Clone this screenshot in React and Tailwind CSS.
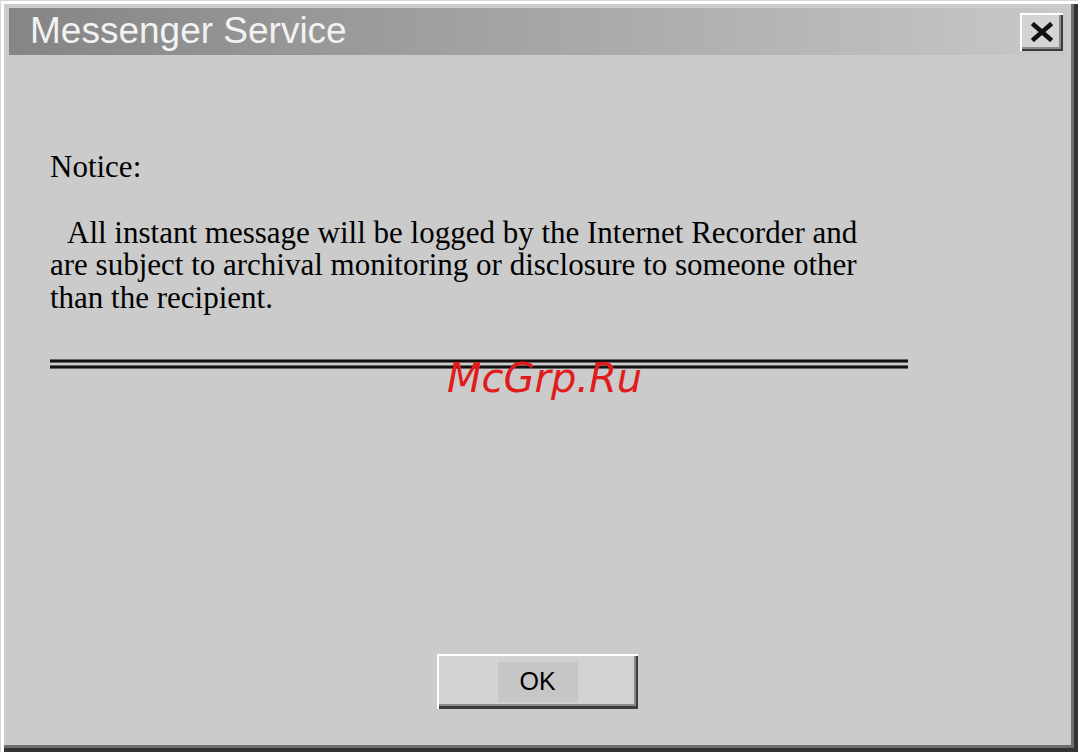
import React from 'react';

const serif = { fontFamily: '"Liberation Serif", "DejaVu Serif", serif' };

function CloseButton() {
  return (
    <button className="flex h-[38px] w-[43px] items-center justify-center bg-[#d4d4d4] shadow-[inset_2px_2px_0_#ffffff,inset_-2px_-2px_0_#3c3c3c,inset_-4px_-4px_0_#8a8a8a]">
      <svg width="26" height="20" viewBox="0 0 26 20">
        <path d="M5 3 L21 17 M21 3 L5 17" stroke="#111" strokeWidth="4.5" strokeLinecap="square" />
      </svg>
    </button>
  );
}

export default function App() {
  return (
    <div className="h-[752px] w-[1078px] overflow-hidden bg-[#cbcbcb] pt-[8px] pr-[10px] pl-[9px] shadow-[inset_1px_1px_0_#d6d6d6,inset_4px_4px_0_#ffffff,inset_-4px_-4px_0_#333333,inset_-7px_-7px_0_#6e6e6e]">
      {/* Title bar */}
      <div className="flex h-[47px] items-center justify-between bg-gradient-to-r from-[#858585] to-[#c8c8c8] pl-[21px] pr-[5px]">
        <span className="-mt-[3px] text-[37px] leading-none text-[#f2f2f2]" style={{ fontFamily: '"Liberation Sans", Arial, sans-serif' }}>
          Messenger Service
        </span>
        <CloseButton />
      </div>

      {/* Body */}
      <div className="relative h-[689px] pl-[41px]">
        <div className="pt-[96px] text-[31px] leading-[32.5px] text-black" style={serif}>
          <p>Notice:</p>
          <p className="mt-[33px] pl-[17px]">All instant message will be logged by the Internet Recorder and</p>
          <p>are subject to archival monitoring or disclosure to someone other</p>
          <p>than the recipient.</p>
        </div>

        {/* Double separator */}
        <div className="mt-[45px] w-[858px]">
          <div className="h-[4px] border-t border-b border-[#666] bg-[#111]" />
          <div className="h-[2px]" />
          <div className="h-[4px] border-t border-b border-[#666] bg-[#111]" />
        </div>

        <div
          className="absolute left-[438px] top-[303px] text-[40px] italic leading-none text-[#e01c1c]"
          style={{ fontFamily: '"DejaVu Sans", sans-serif' }}
        >
          McGrp.Ru
        </div>

        {/* OK button */}
        <div className="absolute left-[428px] top-[599px]">
          <button className="flex h-[55px] w-[201px] items-center justify-center bg-[#d2d2d2] shadow-[inset_2px_2px_0_#ffffff,inset_-2px_-3px_0_#3c3c3c,inset_-4px_-5px_0_#8a8a8a]">
            <span
              className="flex h-[40px] w-[80px] items-center justify-center bg-[#c6c6c6] text-[25px] text-black"
              style={{ fontFamily: '"Liberation Sans", Arial, sans-serif' }}
            >
              OK
            </span>
          </button>
        </div>
      </div>
    </div>
  );
}
